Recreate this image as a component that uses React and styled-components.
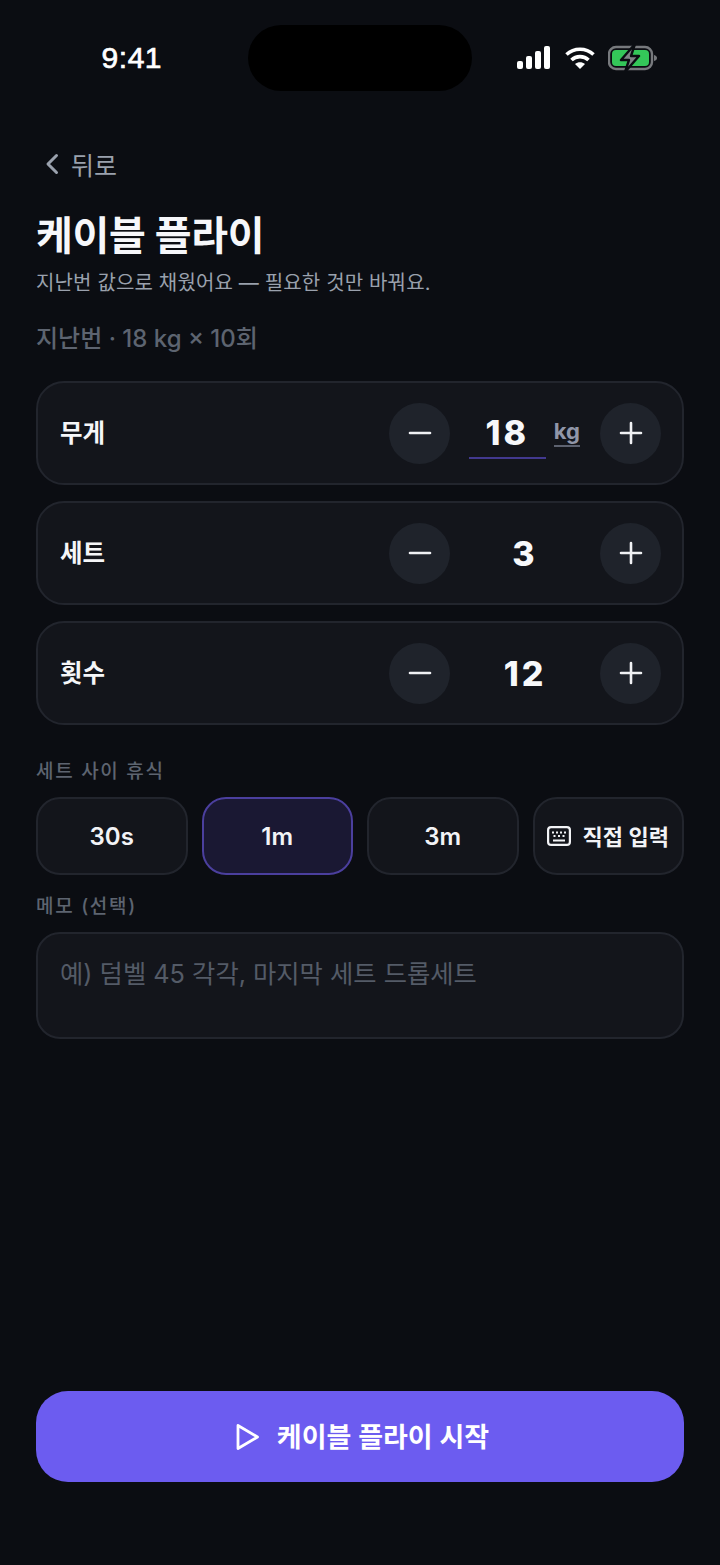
import styled, { createGlobalStyle } from "styled-components";
import { useState } from "react";

const GlobalStyle = createGlobalStyle`
  html, body {
    margin: 0;
    padding: 0;
    background: #0b0d12;
  }
  * {
    box-sizing: border-box;
  }
`;

const Page = styled.div`
  width: 720px;
  height: 1565px;
  display: flex;
  flex-direction: column;
  overflow: hidden;
  background: #0b0d12;
  color: #f5f6f8;
  font-family: Inter, "Noto Sans CJK KR", sans-serif;
`;

const StatusBar = styled.div`
  height: 91px;
  padding-top: 25px;
  display: flex;
  justify-content: center;
  align-items: flex-start;
  flex-shrink: 0;
`;

const StatusSide = styled.div`
  width: 248px;
  height: 66px;
  display: flex;
  align-items: center;
  justify-content: ${({ $right }) => ($right ? "flex-start" : "flex-end")};
  padding: ${({ $right }) => ($right ? "0 0 0 44px" : "0 86px 0 0")};
  gap: 13px;
`;

const Clock = styled.span`
  font-family: "Liberation Sans", sans-serif;
  font-size: 30px;
  font-weight: 400;
  color: #fff;
  letter-spacing: 0.5px;
  -webkit-text-stroke: 0.7px #fff;
`;

const Island = styled.div`
  width: 224px;
  height: 66px;
  border-radius: 33px;
  background: #000;
`;

const Content = styled.div`
  flex: 1;
  display: flex;
  flex-direction: column;
  padding: 0 36px 83px;
`;

const BackLink = styled.div`
  display: flex;
  align-items: center;
  gap: 11px;
  height: 36px;
  margin-top: 55px;
  padding-left: 8px;
  font-size: 25px;
  color: #9aa1ad;
`;

const Title = styled.h1`
  margin: 30px 0 0;
  font-size: 40px;
  line-height: 48px;
  font-weight: 700;
  letter-spacing: -0.3px;
  color: #f6f7fa;
`;

const Subtitle = styled.p`
  margin: 8px 0 0;
  font-size: 20px;
  line-height: 30px;
  letter-spacing: 0.15px;
  color: #9aa1ad;
`;

const LastTime = styled.p`
  margin: 24px 0 0;
  font-size: 24px;
  line-height: 34px;
  font-weight: 500;
  color: #5d6470;
`;

const Steppers = styled.div`
  display: flex;
  flex-direction: column;
  gap: 16px;
  margin-top: 25px;
`;

const StepperCard = styled.div`
  height: 104px;
  display: flex;
  align-items: center;
  justify-content: space-between;
  padding: 0 21px 0 22px;
  background: #13151b;
  border: 2px solid #22252d;
  border-radius: 28px;
`;

const StepperLabel = styled.span`
  font-size: 24.5px;
  font-weight: 600;
  padding-bottom: 4px;
  color: #f5f6f8;
`;

const Controls = styled.div`
  display: flex;
  align-items: center;
`;

const RoundButton = styled.button`
  width: 61px;
  height: 61px;
  padding: 0;
  border: none;
  border-radius: 50%;
  background: #1f232b;
  color: #f0f1f4;
  display: flex;
  align-items: center;
  justify-content: center;
`;

const ValueArea = styled.div`
  width: 150px;
  height: 61px;
  display: flex;
  align-items: center;
  justify-content: center;
  font-size: 34px;
  font-weight: 800;
  letter-spacing: 3px;
  color: #f7f8fa;
`;

const ValueInput = styled.div`
  width: 78px;
  margin-left: 19px;
  margin-top: 2px;
  height: 50px;
  line-height: 48px;
  padding-left: 0;
  text-align: center;
  border-bottom: 2px solid #42398f;
`;

const Unit = styled.span`
  margin: 0 20px 3px 8px;
  font-size: 22px;
  line-height: 28px;
  font-weight: 700;
  letter-spacing: 0;
  color: #9096a8;
  border-bottom: 2px solid #5d6270;
`;

const SectionLabel = styled.div`
  font-size: 19px;
  line-height: 26px;
  font-weight: 500;
  letter-spacing: 1.7px;
  color: #5d6470;
  margin-top: ${({ $top }) => $top}px;
`;

const Chips = styled.div`
  display: grid;
  grid-template-columns: repeat(4, 1fr);
  gap: 14px;
  margin-top: 12px;
`;

const Chip = styled.button`
  height: 78px;
  padding: 0;
  display: flex;
  align-items: center;
  justify-content: center;
  gap: 11px;
  font-family: inherit;
  font-size: ${({ $small }) => ($small ? 22 : 24)}px;
  font-weight: 600;
  color: #f2f3f6;
  background: ${({ $active }) => ($active ? "#1a1833" : "#13151b")};
  border: 2px solid ${({ $active }) => ($active ? "#4b3f9e" : "#22252d")};
  border-radius: 24px;
`;

const ChipText = styled.span`
  padding-bottom: 3px;
`;

const MemoBox = styled.div`
  height: 107px;
  margin-top: 12px;
  padding: 22px 22px;
  background: #13151b;
  border: 2px solid #22252d;
  border-radius: 24px;
  font-size: 25.3px;
  line-height: 36px;
  color: #545b67;
`;

const StartButton = styled.button`
  height: 91px;
  margin-top: auto;
  display: flex;
  align-items: center;
  justify-content: center;
  gap: 18px;
  font-family: inherit;
  font-size: 27px;
  font-weight: 600;
  color: #fff;
  background: #6c5cf0;
  border: none;
  border-radius: 32px;
`;

const StartLabel = styled.span`
  padding-bottom: 3px;
`;

const steppers = [
  { label: "무게", value: "18", unit: "kg" },
  { label: "세트", value: "3" },
  { label: "횟수", value: "12" },
];

const rests = ["30s", "1m", "3m"];

const SignalIcon = () => (
  <svg width="36" height="24" viewBox="0 0 36 24" fill="#fff">
    <rect x="1" y="15" width="6" height="8" rx="2" />
    <rect x="10" y="10" width="6" height="13" rx="2" />
    <rect x="19" y="5" width="6" height="18" rx="2" />
    <rect x="28" y="0" width="6" height="23" rx="2" />
  </svg>
);

const WifiIcon = () => (
  <svg width="30" height="24" viewBox="0 0 30 24" fill="none" stroke="#fff" strokeWidth="3.6">
    <path d="M1.5 8.5 C9 1.5 21 1.5 28.5 8.5" />
    <path d="M6.5 14 C11 9.5 19 9.5 23.5 14" />
    <path d="M15 23 L10 18 C13 15.8 17 15.8 20 18 Z" fill="#fff" stroke="none" />
  </svg>
);

const BatteryIcon = () => (
  <svg width="50" height="26" viewBox="0 0 50 26" fill="none">
    <rect x="1" y="2" width="43" height="22" rx="7" stroke="#77797d" strokeWidth="2.4" />
    <rect x="4" y="5" width="37" height="16" rx="4" fill="#34c759" />
    <path d="M46 10 C48 10.5 49 11.5 49 13 C49 14.5 48 15.5 46 16 Z" fill="#77797d" />
    <path d="M27 -1 L13 15 H21 L17 27 L31 11 H23 Z" fill="#7f8286" stroke="#0b0d12" strokeWidth="2.4" strokeLinejoin="round" />
  </svg>
);

const ChevronLeft = () => (
  <svg width="16" height="24" viewBox="0 0 16 24" fill="none" stroke="#9aa1ad" strokeWidth="3" strokeLinecap="round" strokeLinejoin="round">
    <path d="M12.5 3.5 L4 12 L12.5 20.5" />
  </svg>
);

const MinusIcon = () => (
  <svg width="24" height="24" viewBox="0 0 24 24" fill="none" stroke="currentColor" strokeWidth="2.6" strokeLinecap="round">
    <path d="M2 12 H22" />
  </svg>
);

const PlusIcon = () => (
  <svg width="24" height="24" viewBox="0 0 24 24" fill="none" stroke="currentColor" strokeWidth="2.6" strokeLinecap="round">
    <path d="M2 12 H22 M12 2 V22" />
  </svg>
);

const KeyboardIcon = () => (
  <svg width="24" height="20" viewBox="0 0 24 20" fill="none" stroke="#f2f3f6" strokeWidth="2.2">
    <rect x="1.1" y="1.1" width="21.8" height="17.8" rx="3" />
    <path d="M5 6.5 H7 M9 6.5 H11 M13 6.5 H15 M17 6.5 H19 M6.5 10 H8.5 M11 10 H13 M15.5 10 H17.5 M6 14.5 H18" />
  </svg>
);

const PlayIcon = () => (
  <svg width="28" height="28" viewBox="0 0 28 28" fill="none" stroke="#fff" strokeWidth="2.8" strokeLinejoin="round">
    <path d="M7 2.5 L26.5 14 L7 25.5 Z" />
  </svg>
);

const App = () => {
  const [rest] = useState("1m");

  return (
    <Page>
      <GlobalStyle />
      <StatusBar>
        <StatusSide>
          <Clock>9:41</Clock>
        </StatusSide>
        <Island />
        <StatusSide $right>
          <SignalIcon />
          <WifiIcon />
          <BatteryIcon />
        </StatusSide>
      </StatusBar>
      <Content>
        <BackLink>
          <ChevronLeft />
          뒤로
        </BackLink>
        <Title>케이블 플라이</Title>
        <Subtitle>지난번 값으로 채웠어요 — 필요한 것만 바꿔요.</Subtitle>
        <LastTime>지난번 · 18 kg × 10회</LastTime>

        <Steppers>
          {steppers.map((s) => (
            <StepperCard key={s.label}>
              <StepperLabel>{s.label}</StepperLabel>
              <Controls>
                <RoundButton>
                  <MinusIcon />
                </RoundButton>
                <ValueArea>
                  {s.unit ? (
                    <>
                      <ValueInput>{s.value}</ValueInput>
                      <Unit>{s.unit}</Unit>
                    </>
                  ) : (
                    s.value
                  )}
                </ValueArea>
                <RoundButton>
                  <PlusIcon />
                </RoundButton>
              </Controls>
            </StepperCard>
          ))}
        </Steppers>

        <SectionLabel $top={34}>세트 사이 휴식</SectionLabel>
        <Chips>
          {rests.map((r) => (
            <Chip key={r} $active={r === rest}>
              {r}
            </Chip>
          ))}
          <Chip $small>
            <KeyboardIcon />
            <ChipText>직접 입력</ChipText>
          </Chip>
        </Chips>

        <SectionLabel $top={19}>메모 (선택)</SectionLabel>
        <MemoBox>예) 덤벨 45 각각, 마지막 세트 드롭세트</MemoBox>

        <StartButton>
          <PlayIcon />
          <StartLabel>케이블 플라이 시작</StartLabel>
        </StartButton>
      </Content>
    </Page>
  );
};

export default App;
